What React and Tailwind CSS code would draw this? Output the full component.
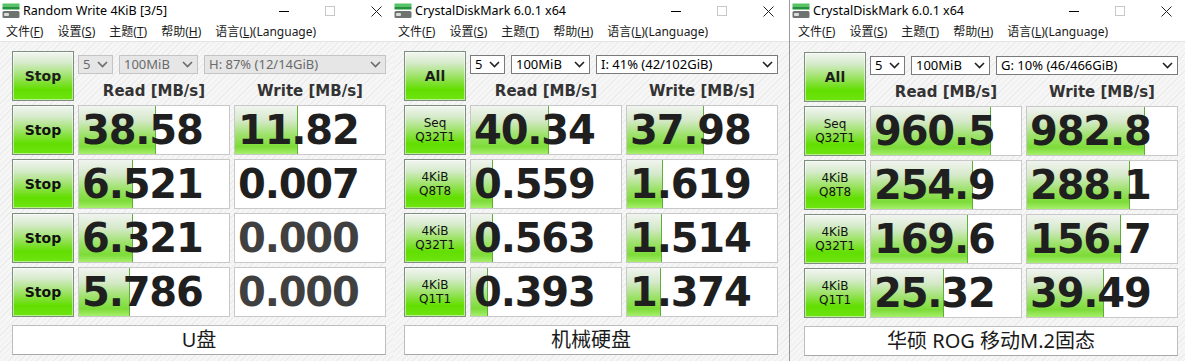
import React from 'react'

const windows = [
  {
    title: 'Random Write 4KiB [3/5]',
    running: true,
    drive: 'H: 87% (12/14GiB)',
    label: 'U盘',
    width: 'w-[393px]',
    titlePad: 'pl-[2px]',
    menuPad: 'pl-[6px]',
    bodyPad: 'pl-[12px] pt-[9px]',
    ctrl: 'mr-[-6px]',
    border: '',
    rows: [
      { name: ['Stop'], read: ['38.58', 77], write: ['11.82', 63] },
      { name: ['Stop'], read: ['6.521', 54], write: ['0.007', 0] },
      { name: ['Stop'], read: ['6.321', 54], write: ['0.000', 0, true] },
      { name: ['Stop'], read: ['5.786', 51], write: ['0.000', 0, true] },
    ],
  },
  {
    title: 'CrystalDiskMark 6.0.1 x64',
    running: false,
    drive: 'I: 41% (42/102GiB)',
    label: '机械硬盘',
    width: 'w-[396px]',
    titlePad: 'pl-[1px]',
    menuPad: 'pl-[5px]',
    bodyPad: 'pl-[11px] pt-[9px]',
    ctrl: 'mr-[-2px]',
    border: '',
    rows: [
      { name: ['Seq', 'Q32T1'], read: ['40.34', 78], write: ['37.98', 77] },
      { name: ['4KiB', 'Q8T8'], read: ['0.559', 22], write: ['1.619', 36] },
      { name: ['4KiB', 'Q32T1'], read: ['0.563', 22], write: ['1.514', 35] },
      { name: ['4KiB', 'Q1T1'], read: ['0.393', 17], write: ['1.374', 34] },
    ],
  },
  {
    title: 'CrystalDiskMark 6.0.1 x64',
    running: false,
    drive: 'G: 10% (46/466GiB)',
    label: '华硕 ROG 移动M.2固态',
    width: 'w-[396px]',
    titlePad: 'pl-[2px]',
    menuPad: 'pl-[8px]',
    bodyPad: 'pl-[14px] pt-[10px]',
    ctrl: 'mr-[-4px]',
    border: 'border-l border-[#9a9a9a]',
    rows: [
      { name: ['Seq', 'Q32T1'], read: ['960.5', 120], write: ['982.8', 118] },
      { name: ['4KiB', 'Q8T8'], read: ['254.9', 102], write: ['288.1', 103] },
      { name: ['4KiB', 'Q32T1'], read: ['169.6', 97], write: ['156.7', 94] },
      { name: ['4KiB', 'Q1T1'], read: ['25.32', 73], write: ['39.49', 77] },
    ],
  },
]

const menus = [
  ['文件(', 'F', ')'],
  ['设置(', 'S', ')'],
  ['主题(', 'T', ')'],
  ['帮助(', 'H', ')'],
  ['语言(', 'L', ')(Language)'],
]

const cjk = "font-['Noto_Sans','Noto_Sans_CJK_SC',sans-serif]"
const tahoma = "font-['DejaVu_Sans',sans-serif]"

const greenBtn =
  'border border-[#7f8f7f] bg-[linear-gradient(to_bottom,#f2f5f1_0%,#d6ebcc_22%,#9fe36a_50%,#62de00_78%,#6ee412_100%)] shadow-[inset_0_0_0_1px_rgba(255,255,255,0.5)]'

function AppIcon() {
  return (
    <svg width="18" height="16" viewBox="0 0 18 16">
      <rect x="0.5" y="0.5" width="17" height="3" fill="#55c463" />
      <rect x="0.5" y="3.5" width="17" height="3" fill="#21913a" />
      <rect x="0.5" y="8" width="17" height="7" rx="1.5" fill="#6e7370" />
      <rect x="2" y="10" width="5" height="3" rx="1" fill="#d9dcd9" />
    </svg>
  )
}

function Chevron({ color }) {
  return (
    <svg width="11" height="7" viewBox="0 0 11 7">
      <polyline points="1,1 5.5,5.5 10,1" fill="none" stroke={color} strokeWidth="1.6" />
    </svg>
  )
}

function Select({ text, width, disabled }) {
  return (
    <div
      className={`${width} h-[19px] flex items-center justify-between pl-[4px] pr-[4px] border text-[13px] leading-none ${
        disabled
          ? 'bg-[#e6e6e6] border-[#c4c4c4] text-[#6a6a6a]'
          : 'bg-white border-[#7a7a7a] text-black'
      }`}
    >
      <span>{text}</span>
      <Chevron color={disabled ? '#6a6a6a' : '#222'} />
    </div>
  )
}

function Value({ value, bar, dim }) {
  return (
    <div className="relative h-[50px] bg-white border border-[#c8c8c8] overflow-hidden flex items-center">
      {bar > 0 && (
        <div
          className="absolute left-0 top-0 bottom-0 border-r border-[#5fae3c] bg-[linear-gradient(to_bottom,#f1f4f0_0%,#d5e9c9_30%,#9de26a_60%,#7ddc38_85%,#a6ef6c_100%)]"
          style={{ width: bar }}
        />
      )}
      <span
        className={`relative pl-[3px] text-[40px] leading-none font-bold tracking-[-1.2px] ${tahoma} ${
          dim ? 'text-[#404040]' : 'text-[#1f1f1f]'
        }`}
      >
        {value}
      </span>
    </div>
  )
}

function Window({ w }) {
  return (
    <div className={`${w.width} shrink-0 h-[361px] flex flex-col overflow-hidden ${w.border}`}>
      {/* Title bar */}
      <div className={`h-[22px] bg-white flex items-center ${w.titlePad}`}>
        <AppIcon />
        <span className="ml-[3px] text-[12.5px] text-black font-['Noto_Sans',sans-serif]">{w.title}</span>
        <div className={`ml-auto flex items-center ${w.ctrl}`}>
          <div className="w-[46px] flex justify-center">
            <div className="w-[10px] h-px bg-black" />
          </div>
          <div className="w-[46px] flex justify-center">
            <div className="w-[10px] h-[10px] border border-[#c8c8c8]" />
          </div>
          <div className="w-[46px] flex justify-center">
            <svg width="11" height="11" viewBox="0 0 11 11">
              <path d="M0.5 0.5 L10.5 10.5 M10.5 0.5 L0.5 10.5" stroke="#222" strokeWidth="1" />
            </svg>
          </div>
        </div>
      </div>

      {/* Menu bar */}
      <div className={`h-[19px] bg-white flex items-center gap-[14px] ${w.menuPad} text-[12px] text-[#1a1a1a] ${cjk}`}>
        {menus.map((m) => (
          <span key={m[1]}>
            {m[0]}
            <span className="underline">{m[1]}</span>
            {m[2]}
          </span>
        ))}
      </div>

      {/* Body */}
      <div
        className={`flex-1 border-t border-[#e4e4e4] bg-[repeating-linear-gradient(135deg,#f6f6f6_0px,#f6f6f6_3px,#ececec_3px,#ececec_4px)] ${w.bodyPad}`}
      >
        <div className="w-[374px] grid grid-cols-[62px_152px_152px] gap-x-[4px] gap-y-[4px]">
          <div
            className={`h-[50px] flex items-center justify-center text-[14px] font-bold text-[#1d1d1d] ${tahoma} ${greenBtn}`}
          >
            {w.running ? 'Stop' : 'All'}
          </div>
          <div className="col-span-2 flex flex-col">
            <div className={`mt-[4px] flex gap-[6px] ${cjk}`}>
              <Select text="5" width="w-[35px]" disabled={w.running} />
              <Select text="100MiB" width="w-[79px]" disabled={w.running} />
              <Select text={w.drive} width="w-[182px]" disabled={w.running} />
            </div>
            <div className={`mt-[8px] grid grid-cols-2 gap-x-[4px] text-[15px] font-bold text-[#333] leading-[18px] ${tahoma}`}>
              <div className="text-center">Read [MB/s]</div>
              <div className="text-center">Write [MB/s]</div>
            </div>
          </div>

          {w.rows.map((r, i) => (
            <React.Fragment key={i}>
              <div
                className={`h-[50px] flex flex-col items-center justify-center ${tahoma} text-[#111] ${greenBtn} ${
                  r.name.length === 1 ? 'text-[14px] font-bold' : 'text-[12px] leading-[14px]'
                }`}
              >
                {r.name.map((n) => (
                  <span key={n}>{n}</span>
                ))}
              </div>
              <Value value={r.read[0]} bar={r.read[1]} dim={r.read[2]} />
              <Value value={r.write[0]} bar={r.write[1]} dim={r.write[2]} />
            </React.Fragment>
          ))}

          <div
            className={`col-span-3 mt-[4px] h-[30px] bg-white border border-[#bdbdbd] border-b-[#a8a8a8] flex items-center justify-center text-[20px] text-[#1a1a1a] ${cjk}`}
          >
            {w.label}
          </div>
        </div>
      </div>
    </div>
  )
}

export default function App() {
  return (
    <div className="w-[1185px] h-[361px] flex bg-white overflow-hidden">
      {windows.map((w, i) => (
        <Window key={i} w={w} />
      ))}
    </div>
  )
}
